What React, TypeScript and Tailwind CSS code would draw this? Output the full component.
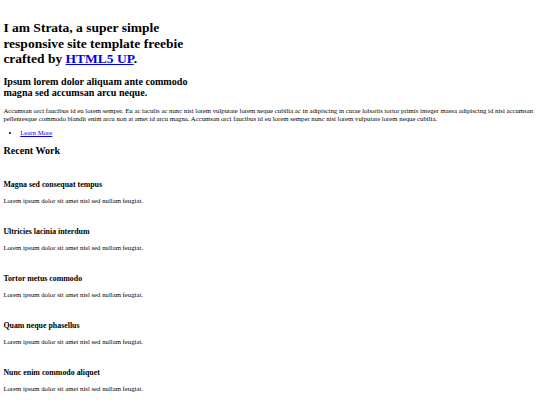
const WORK = [
  'Magna sed consequat tempus',
  'Ultricies lacinia interdum',
  'Tortor metus commodo',
  'Quam neque phasellus',
  'Nunc enim commodo aliquet',
];

// Unstyled page rendered at 1280px and scaled to 540px (factor 0.421875).
// Browser defaults are rebuilt by hand at that scale; line heights are the
// rounded "normal" values of the full-size fonts (18 / 22 / 27 / 37px).
function ImageLine() {
  // empty thumbnail link: produces one line box of body text height
  return (
    <div>
      <span className="inline-block" />
    </div>
  );
}

export default function App() {
  return (
    <div className="h-[405px] overflow-hidden bg-white p-[3.375px] font-['Liberation_Serif','Times_New_Roman',serif] text-[6.75px] leading-[7.594px] text-black">
      <header>
        <ImageLine />
        <h1 className="my-[9.045px] text-[13.5px] leading-[15.61px] font-bold">
          I am Strata, a super simple
          <br />
          responsive site template freebie
          <br />
          crafted by <a href="#" className="text-[#0000ee] underline">HTML5 UP</a>.
        </h1>
      </header>

      <main>
        <section>
          <h2 className="my-[8.404px] text-[10.125px] leading-[11.39px] font-bold">
            Ipsum lorem dolor aliquam ante commodo
            <br />
            magna sed accumsan arcu neque.
          </h2>
          <p className="my-[6.75px]">
            Accumsan orci faucibus id eu lorem semper. Eu ac iaculis ac nunc nisi lorem vulputate lorem neque cubilia ac in adipiscing in curae lobortis tortor primis integer massa adipiscing id nisi accumsan pellentesque commodo blandit enim arcu non at amet id arcu magna. Accumsan orci faucibus id eu lorem semper nunc nisi lorem vulputate lorem neque cubilia.
          </p>
          <ul className="my-[6.75px] list-disc pl-[16.875px]">
            <li>
              <a href="#" className="text-[#0000ee] underline">Learn More</a>
            </li>
          </ul>
        </section>

        <section>
          <h2 className="my-[8.404px] text-[10.125px] leading-[11.39px] font-bold">Recent Work</h2>
          <div>
            {WORK.map((title) => (
              <article key={title}>
                <ImageLine />
                <h3 className="my-[7.898px] text-[7.898px] leading-[9.281px] font-bold">{title}</h3>
                <p className="my-[6.75px]">Lorem ipsum dolor sit amet nisl sed nullam feugiat.</p>
              </article>
            ))}
          </div>
        </section>
      </main>
    </div>
  );
}
